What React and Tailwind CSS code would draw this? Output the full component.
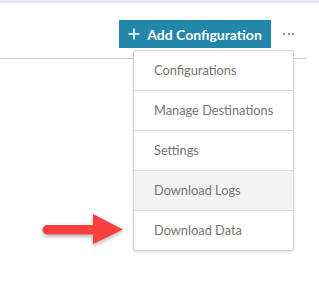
import React from "react";

const items = ["Configurations", "Manage Destinations", "Settings", "Download Logs", "Download Data"];

export default function App() {
  return (
    <div className="relative w-[319px] h-[292px] bg-white overflow-hidden" style={{ fontFamily: "Lato, 'Open Sans', sans-serif" }}>
      <div className="h-[3px] bg-[#e3e9f0]" />
      <div className="flex justify-end items-center pt-[17px] pr-[24px] gap-[12px]">
        <button className="h-[28px] w-[152px] bg-[#2387a9] text-white flex items-center justify-center gap-[7px] text-[14px] font-bold">
          <svg width="12" height="12" viewBox="0 0 12 12" className="shrink-0">
            <path d="M6 0.5V11.5M0.5 6H11.5" stroke="white" strokeWidth="1.6" />
          </svg>
          <span>Add Configuration</span>
        </button>
        <div className="flex gap-[2.5px] items-center w-[12px]">
          <span className="w-[2px] h-[2px] bg-[#8a96a8]" />
          <span className="w-[2px] h-[2px] bg-[#8a96a8]" />
          <span className="w-[2px] h-[2px] bg-[#8a96a8]" />
        </div>
      </div>
      <div className="mt-[10px] h-px w-[307px] bg-[#c9d3dd]" />

      <div className="absolute left-[133px] top-[50px] w-[161px] bg-white border border-[#d6d6d6] rounded-[3px] shadow-[0_1px_3px_rgba(0,0,0,0.12)]">
        {items.map((t, i) => (
          <div
            key={t}
            className={`flex items-center pl-[20px] text-[12.8px] text-[#747474] ${i < 4 ? "h-[40px] border-b border-[#dcdcdc]" : "h-[39px]"} ${i === 3 ? "bg-[#f3f3f3]" : ""}`}
          >
            {t}
          </div>
        ))}
      </div>

      <svg className="absolute left-[36px] top-[208px]" width="96" height="44" viewBox="36 208 96 44" style={{ filter: "drop-shadow(0 2px 2px rgba(0,0,0,0.3))" }}>
        <rect x="42.5" y="225" width="54" height="9.5" rx="4.75" fill="#f8403f" />
        <path d="M93 214 L123 229.5 L93 244 Z" fill="#f8403f" />
      </svg>
    </div>
  );
}
